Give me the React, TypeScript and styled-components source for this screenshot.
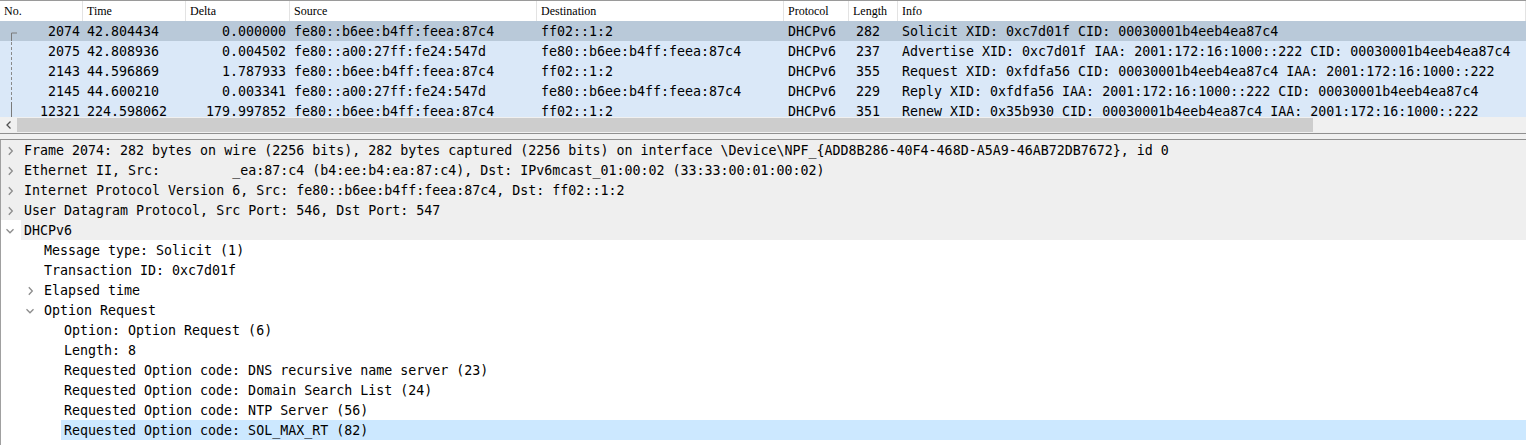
import React from 'react';
import styled, { createGlobalStyle } from 'styled-components';

const GlobalStyle = createGlobalStyle`
  html, body {
    margin: 0;
    padding: 0;
    background: #ffffff;
    overflow: hidden;
  }
`;

const MONO = `"DejaVu Sans Mono", "Liberation Mono", monospace`;
const COLUMNS = '83px 103px 104px 247px 247px 65px 49px 1fr';

interface Packet {
  no: number;
  time: string;
  delta: string;
  source: string;
  destination: string;
  protocol: string;
  length: number;
  info: string;
}

type Link = 'first' | 'middle' | 'last';

const packets: (Packet & { link: Link })[] = [
  { no: 2074, time: '42.804434', delta: '0.000000', source: 'fe80::b6ee:b4ff:feea:87c4', destination: 'ff02::1:2', protocol: 'DHCPv6', length: 282, info: 'Solicit XID: 0xc7d01f CID: 00030001b4eeb4ea87c4', link: 'first' },
  { no: 2075, time: '42.808936', delta: '0.004502', source: 'fe80::a00:27ff:fe24:547d', destination: 'fe80::b6ee:b4ff:feea:87c4', protocol: 'DHCPv6', length: 237, info: 'Advertise XID: 0xc7d01f IAA: 2001:172:16:1000::222 CID: 00030001b4eeb4ea87c4', link: 'middle' },
  { no: 2143, time: '44.596869', delta: '1.787933', source: 'fe80::b6ee:b4ff:feea:87c4', destination: 'ff02::1:2', protocol: 'DHCPv6', length: 355, info: 'Request XID: 0xfdfa56 CID: 00030001b4eeb4ea87c4 IAA: 2001:172:16:1000::222', link: 'middle' },
  { no: 2145, time: '44.600210', delta: '0.003341', source: 'fe80::a00:27ff:fe24:547d', destination: 'fe80::b6ee:b4ff:feea:87c4', protocol: 'DHCPv6', length: 229, info: 'Reply XID: 0xfdfa56 IAA: 2001:172:16:1000::222 CID: 00030001b4eeb4ea87c4', link: 'middle' },
  { no: 12321, time: '224.598062', delta: '179.997852', source: 'fe80::b6ee:b4ff:feea:87c4', destination: 'ff02::1:2', protocol: 'DHCPv6', length: 351, info: 'Renew XID: 0x35b930 CID: 00030001b4eeb4ea87c4 IAA: 2001:172:16:1000::222', link: 'last' },
];

interface TreeItem {
  text: string;
  depth: number;
  expander?: 'open' | 'closed';
  shaded?: 'full' | 'label';
  selected?: boolean;
}

const treeItems: TreeItem[] = [
  { text: 'Frame 2074: 282 bytes on wire (2256 bits), 282 bytes captured (2256 bits) on interface \\Device\\NPF_{ADD8B286-40F4-468D-A5A9-46AB72DB7672}, id 0', depth: 0, expander: 'closed', shaded: 'full' },
  { text: 'Ethernet II, Src:         _ea:87:c4 (b4:ee:b4:ea:87:c4), Dst: IPv6mcast_01:00:02 (33:33:00:01:00:02)', depth: 0, expander: 'closed', shaded: 'full' },
  { text: 'Internet Protocol Version 6, Src: fe80::b6ee:b4ff:feea:87c4, Dst: ff02::1:2', depth: 0, expander: 'closed', shaded: 'full' },
  { text: 'User Datagram Protocol, Src Port: 546, Dst Port: 547', depth: 0, expander: 'closed', shaded: 'full' },
  { text: 'DHCPv6', depth: 0, expander: 'open', shaded: 'label' },
  { text: 'Message type: Solicit (1)', depth: 1 },
  { text: 'Transaction ID: 0xc7d01f', depth: 1 },
  { text: 'Elapsed time', depth: 1, expander: 'closed' },
  { text: 'Option Request', depth: 1, expander: 'open' },
  { text: 'Option: Option Request (6)', depth: 2 },
  { text: 'Length: 8', depth: 2 },
  { text: 'Requested Option code: DNS recursive name server (23)', depth: 2 },
  { text: 'Requested Option code: Domain Search List (24)', depth: 2 },
  { text: 'Requested Option code: NTP Server (56)', depth: 2 },
  { text: 'Requested Option code: SOL_MAX_RT (82)', depth: 2, selected: true },
];

const LinkMark: React.FC<{ kind: Link }> = ({ kind }) => (
  <LinkSvg width="10" height="20" viewBox="0 0 10 20">
    {kind === 'first' && (
      <path d="M1.5 11 H7 M1.5 11 V20" stroke="#7a7a7a" strokeWidth="1" fill="none" />
    )}
    {kind === 'middle' && (
      <path d="M1.5 0 V20" stroke="#8a8a8a" strokeWidth="1" strokeDasharray="3 2" fill="none" />
    )}
    {kind === 'last' && <path d="M1.5 0 V20" stroke="#7a7a7a" strokeWidth="1" fill="none" />}
  </LinkSvg>
);

const Chevron: React.FC<{ open: boolean }> = ({ open }) => (
  <svg width="10" height="10" viewBox="0 0 10 10">
    {open ? (
      <path d="M1.5 3.3 L5 6.8 L8.5 3.3" stroke="#8c8c8c" strokeWidth="1.3" fill="none" />
    ) : (
      <path d="M3.8 1.3 L7.3 5 L3.8 8.7" stroke="#8c8c8c" strokeWidth="1.3" fill="none" />
    )}
  </svg>
);

const App: React.FC = () => {
  return (
    <Page>
      <GlobalStyle />
      <PacketList>
        <HeaderRow>
          {['No.', 'Time', 'Delta', 'Source', 'Destination', 'Protocol', 'Length', 'Info'].map((h) => (
            <HeaderCell key={h}>{h}</HeaderCell>
          ))}
        </HeaderRow>
        <RowsViewport>
          {packets.map((p, i) => (
            <PacketRow key={p.no} selected={i === 0}>
              <NoCell>
                <LinkMark kind={p.link} />
                <span>{p.no}</span>
              </NoCell>
              <Cell>{p.time}</Cell>
              <Cell align="right">{p.delta}</Cell>
              <Cell>{p.source}</Cell>
              <Cell>{p.destination}</Cell>
              <Cell>{p.protocol}</Cell>
              <Cell align="right" padRight={18}>{p.length}</Cell>
              <Cell>{p.info}</Cell>
            </PacketRow>
          ))}
        </RowsViewport>
        <HScrollbar>
          <ScrollArrow>
            <svg width="8" height="10" viewBox="0 0 8 10">
              <path d="M5.5 1.5 L2 5 L5.5 8.5" stroke="#505050" strokeWidth="1.3" fill="none" />
            </svg>
          </ScrollArrow>
          <ScrollTrack>
            <ScrollThumb />
          </ScrollTrack>
        </HScrollbar>
      </PacketList>
      <Splitter />
      <DetailTree>
        {treeItems.map((item, i) => (
          <TreeRow key={i} shaded={item.shaded === 'full'}>
            <Indent style={{ width: item.depth * 20 }} />
            <Expander>{item.expander && <Chevron open={item.expander === 'open'} />}</Expander>
            <TreeLabel selected={item.selected} shaded={item.shaded === 'label'}>
              {item.text}
            </TreeLabel>
          </TreeRow>
        ))}
      </DetailTree>
    </Page>
  );
};

const Page = styled.div`
  width: 1526px;
  height: 445px;
  overflow: hidden;
  display: flex;
  flex-direction: column;
  font-family: ${MONO};
  font-size: 13.3px;
  color: #000;
`;

const PacketList = styled.div`
  border-top: 1px solid #9a9a9a;
  display: flex;
  flex-direction: column;
`;

const HeaderRow = styled.div`
  display: grid;
  grid-template-columns: ${COLUMNS};
  height: 20px;
  background: #ffffff;
`;

const HeaderCell = styled.div`
  font-family: "Liberation Serif", serif;
  font-size: 12px;
  line-height: 20px;
  padding-left: 4px;
  border-right: 1px solid #e3e3e3;
  white-space: nowrap;
  overflow: hidden;
`;

const RowsViewport = styled.div`
  height: 96px;
  overflow: hidden;
`;

const PacketRow = styled.div<{ selected?: boolean }>`
  display: grid;
  grid-template-columns: ${COLUMNS};
  height: 20px;
  line-height: 21px;
  overflow: hidden;
  background: ${(p) => (p.selected ? '#b9c9d9' : '#dae8f8')};
`;

const Cell = styled.div<{ align?: 'left' | 'right'; padRight?: number }>`
  white-space: nowrap;
  overflow: hidden;
  text-align: ${(p) => p.align || 'left'};
  padding: 0 ${(p) => (p.padRight ?? 4)}px 0 4px;
`;

const NoCell = styled.div`
  display: flex;
  align-items: center;
  justify-content: space-between;
  padding: 0 3px 0 10px;
  white-space: nowrap;
`;

const LinkSvg = styled.svg`
  display: block;
  flex-shrink: 0;
`;

const HScrollbar = styled.div`
  height: 16px;
  display: flex;
  background: #f0f0f0;
`;

const ScrollArrow = styled.div`
  width: 17px;
  display: flex;
  align-items: center;
  justify-content: center;
`;

const ScrollTrack = styled.div`
  flex: 1;
  display: flex;
  padding: 1px 0;
`;

const ScrollThumb = styled.div`
  width: 1296px;
  background: #cdcdcd;
`;

const Splitter = styled.div`
  height: 5px;
  background: #f0f0f0;
  border-top: 1px solid #8f8f8f;
  border-bottom: 1px solid #8f8f8f;
`;

const DetailTree = styled.div`
  flex: 1;
  background: #ffffff;
  border-left: 1px solid #a0a0a0;
`;

const TreeRow = styled.div<{ shaded?: boolean }>`
  display: flex;
  align-items: stretch;
  height: 20px;
  line-height: 22px;
  overflow: hidden;
  background: ${(p) => (p.shaded ? '#efefef' : 'transparent')};
  white-space: pre;
`;

const Indent = styled.div`
  flex-shrink: 0;
`;

const Expander = styled.div`
  width: 23px;
  flex-shrink: 0;
  display: flex;
  align-items: center;
  padding: 1px 0 0 4px;
  box-sizing: border-box;
`;

const TreeLabel = styled.div<{ selected?: boolean; shaded?: boolean }>`
  flex: 1;
  margin-left: -3px;
  padding-left: 3px;
  background: ${(p) => (p.selected ? '#cce8ff' : p.shaded ? '#efefef' : 'transparent')};
`;

export default App;
